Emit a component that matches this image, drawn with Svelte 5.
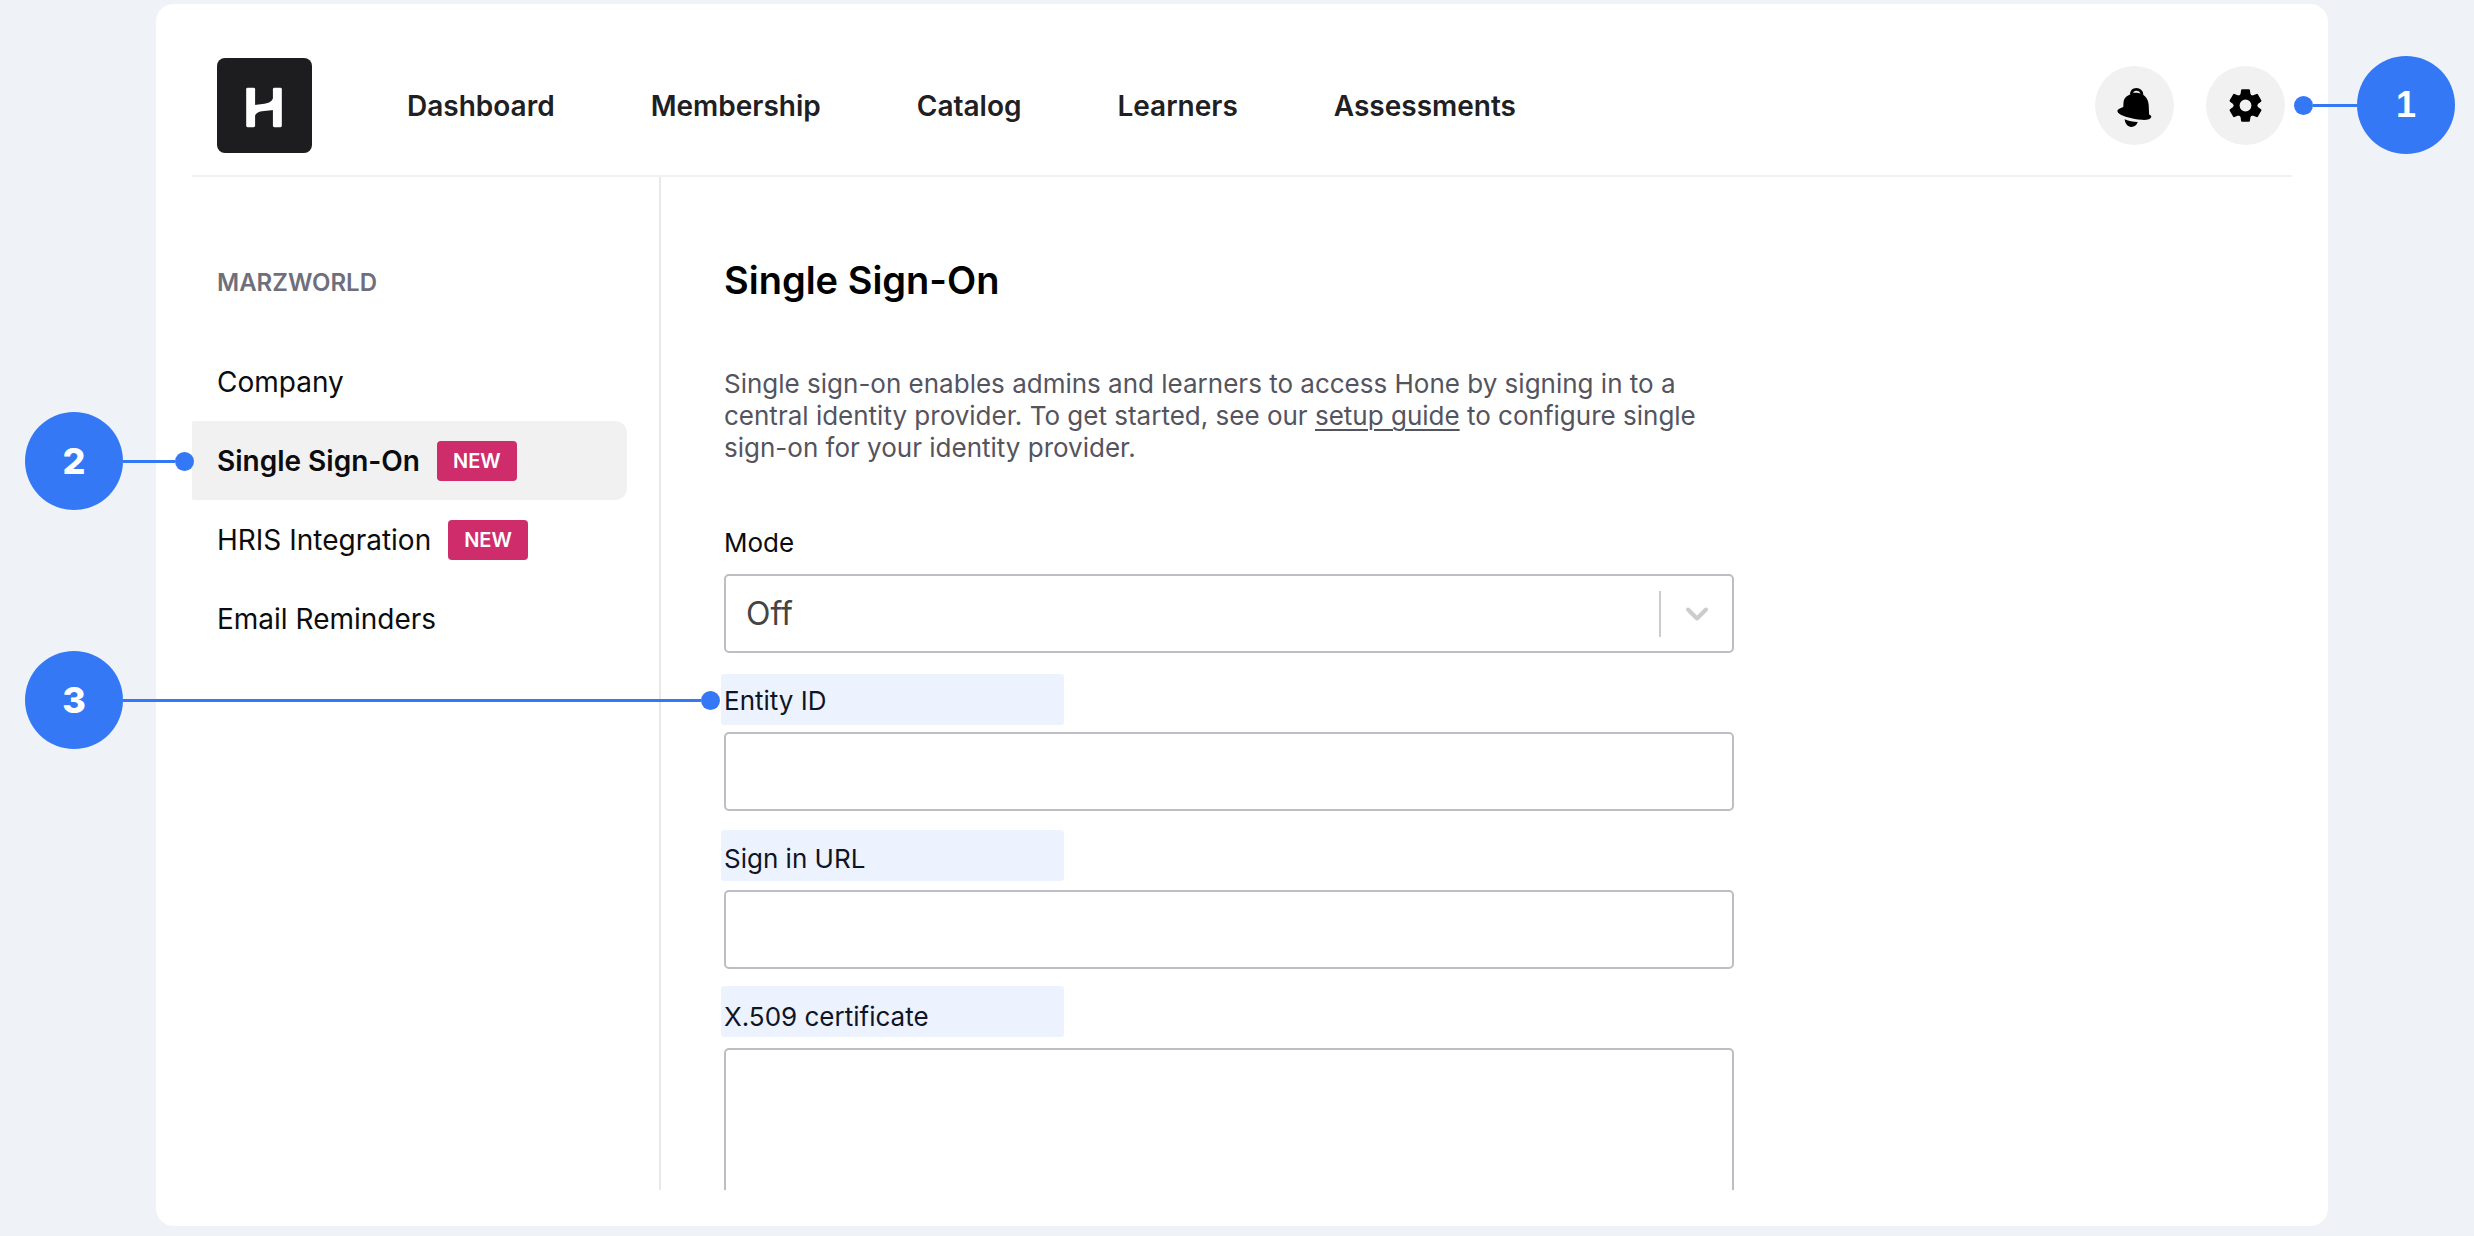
<script>
  const links = ['Dashboard', 'Membership', 'Catalog', 'Learners', 'Assessments'];
  const sections = [
    { name: 'Company' },
    { name: 'Single Sign-On', isNew: true, current: true },
    { name: 'HRIS Integration', isNew: true },
    { name: 'Email Reminders' }
  ];
  let mode = $state('off');
</script>

{#snippet callout(number, side)}
  <span class="callout {side}">
    <span class="number">{number}</span>
    <span class="line"></span>
    <span class="dot"></span>
  </span>
{/snippet}

<div class="page">
  <div class="card">
    <header>
      <a class="logo" href="#home" aria-label="Home">
        <svg viewBox="0 0 96 96" fill="#fff" aria-hidden="true">
          <rect x="29.500" y="30" width="9" height="40" rx="1.500" />
          <rect x="56.500" y="30" width="9" height="40" rx="1.500" />
          <path d="M38 47.500l10-1.300c6-.6 9-3.400 9.500-9.200V52.500l-10 1c-5.500.6-8.500 1.800-9.500 6z" />
        </svg>
      </a>
      <nav class="top" aria-label="Main">
        {#each links as link}
          <a href="#{link.toLowerCase()}">{link}</a>
        {/each}
      </nav>
      <div class="actions">
        <button type="button" aria-label="Notifications">
          <svg viewBox="0 0 80 80" aria-hidden="true">
            <path d="M36.800 29c.3-3.500 2.300-5.300 5-5.300 3 0 5.400 2 5.800 5.500" fill="none" stroke="#000" stroke-width="2.800" />
            <path d="M36 28.500c2-1.200 4-1.500 6.500-1.300 7.500.8 11.500 5.500 11.900 12.800l.4 9c1.600.7 2.400 1.500 2.200 2.600-.5 2.300-4.300 3.300-9.900 2.900-8.700-.6-18.500-3-22.800-6.300-1.400-1.200-2-2.600-1.300-3.700.8-1 3.100-1.700 5.600-3l.3-4.500c.3-4.500 2.700-6.700 7.100-8.500z" />
            <path d="M30 54c4.500 1.800 8.500 2.600 13.300 2.800-1.300 3.400-3.600 5-6.600 4.900-3.500-.1-6-2.700-6.700-7.700z" />
          </svg>
        </button>
        <button type="button" aria-label="Settings">
          <svg viewBox="-40 -40 80 80" aria-hidden="true">
            <circle r="9" fill="none" stroke="#000" stroke-width="6" />
            <g>
              {#each [0, 60, 120, 180, 240, 300] as angle}
                <path transform="rotate({angle})" d="M-3.400-16.500h6.800q1 0 1.100 1l.5 3.500 1.500 3.500h-13l1.500-3.500 .5-3.500q.1-1 1.100-1z" />
              {/each}
            </g>
          </svg>
          {@render callout(1, 'from-right')}
        </button>
      </div>
    </header>

    <div class="body">
      <aside>
        <h2>MARZWORLD</h2>
        <ul>
          {#each sections as s}
            <li class:current={s.current}>
              <a href="#{s.name.toLowerCase().replaceAll(' ', '-')}" aria-current={s.current ? 'page' : undefined}>{s.name}</a>
              {#if s.isNew}<span class="badge">NEW</span>{/if}
              {#if s.current}{@render callout(2, 'short')}{/if}
            </li>
          {/each}
        </ul>
      </aside>

      <main>
        <h1>Single Sign-On</h1>
        <p>
          Single sign-on enables admins and learners to access Hone by signing in to a central identity
          provider. To get started, see our <a href="#setup-guide">setup guide</a> to configure single
          sign-on for your identity provider.
        </p>
        <form>
          <div class="field">
            <label for="mode">Mode</label>
            <div class="select">
              <select id="mode" bind:value={mode}>
                <option value="off">Off</option>
                <option value="optional">Optional</option>
                <option value="required">Required</option>
              </select>
              <span class="arrow">
                <svg viewBox="0 0 24 16" aria-hidden="true"><path d="M3 3.500l9 9 9-9" /></svg>
              </span>
            </div>
          </div>
          <div class="field">
            <label for="entity">Entity ID {@render callout(3, 'long')}</label>
            <input id="entity" type="text" />
          </div>
          <div class="field">
            <label for="url">Sign in URL</label>
            <input id="url" type="text" />
          </div>
          <div class="field last">
            <label for="cert">X.509 certificate</label>
            <div class="clip"><textarea id="cert"></textarea></div>
          </div>
          <div class="marks" aria-hidden="true"><span></span><span></span><span></span></div>
        </form>
      </main>
    </div>
  </div>
</div>

<style>
  :global(body) {
    margin: 0;
    background: #eff3f8;
  }
  * {
    box-sizing: border-box;
  }
  .page {
    min-height: 100vh;
    display: flex;
    padding: 4px 146px 10px 156px;
    font-family: Inter, 'Liberation Sans', sans-serif;
    color: #0c0c0e;
  }
  .card {
    flex: 1;
    display: flex;
    flex-direction: column;
    padding: 0 36px 36px;
    border-radius: 18px;
    background: #fff;
  }
  a {
    color: inherit;
    text-decoration: none;
  }
  header {
    display: flex;
    align-items: center;
    padding: 54px 7px 22px 25px;
    border-bottom: 2px solid #f1f1f1;
  }
  .logo {
    width: 95px;
    height: 95px;
    margin-right: 95px;
    border-radius: 8px;
    background: #1d1d1f;
  }
  .logo svg,
  button svg {
    display: block;
    width: 100%;
    height: 100%;
  }
  .top {
    display: flex;
    gap: 96px;
    font-size: 28px;
    line-height: 32px;
    font-weight: 600;
    color: #1f2023;
  }
  .actions {
    display: flex;
    gap: 32px;
    margin-left: auto;
  }
  button {
    position: relative;
    width: 79px;
    height: 79px;
    padding: 0;
    border: 0;
    border-radius: 50%;
    background: #f1f1f1;
  }
  .body {
    flex: 1;
    display: flex;
  }
  aside {
    width: 469px;
    padding: 90px 32px 0 0;
    border-right: 2px solid #e8e8e9;
  }
  h2 {
    margin: 0 0 43px;
    padding-left: 25px;
    font-size: 24px;
    line-height: 32px;
    font-weight: 600;
    color: #6f6f7b;
  }
  ul {
    margin: 0;
    padding: 0;
    list-style: none;
  }
  li {
    position: relative;
    display: flex;
    align-items: center;
    gap: 17px;
    height: 79px;
    padding-left: 25px;
    font-size: 28px;
    line-height: 32px;
    border-radius: 2px 12px 12px 2px;
  }
  .current {
    background: #f1f1f1;
    font-weight: 600;
  }
  .badge {
    padding: 4px 16px;
    border-radius: 4px;
    background: #ce2c6b;
    color: #fff;
    font-size: 20px;
    line-height: 32px;
    font-weight: 600;
  }
  main {
    flex: 1;
    display: flex;
    flex-direction: column;
    padding: 79px 0 0 63px;
  }
  h1 {
    margin: 0 0 64px;
    font-size: 38px;
    line-height: 48px;
    font-weight: 600;
    color: #000;
  }
  p {
    margin: 0 0 31px;
    max-width: 980px;
    font-size: 26px;
    line-height: 32px;
    color: #54545e;
  }
  p a {
    text-decoration: underline;
    text-underline-offset: 4px;
    text-decoration-thickness: 2px;
  }
  form {
    position: relative;
    flex: 1;
    display: flex;
    flex-direction: column;
    max-width: 1010px;
  }
  .field {
    display: flex;
    flex-direction: column;
  }
  label {
    position: relative;
    padding: 32px 0 15px;
    font-size: 26px;
    line-height: 32px;
  }
  input,
  select,
  textarea {
    display: block;
    width: 100%;
    height: 79px;
    padding: 0 20px;
    border: 2px solid #bdbdc3;
    border-radius: 5px;
    background: #fff;
    color: #444;
    font: inherit;
    font-size: 32px;
    appearance: none;
    outline: 0;
  }
  .select {
    position: relative;
  }
  .arrow {
    position: absolute;
    top: 17px;
    right: 2px;
    bottom: 16px;
    width: 73px;
    display: grid;
    place-items: center;
    border-left: 2px solid #ccc;
    pointer-events: none;
  }
  .arrow svg {
    width: 24px;
    height: 16px;
    fill: none;
    stroke: #ccc;
    stroke-width: 4;
    stroke-linecap: round;
    stroke-linejoin: round;
  }
  .last {
    flex: 1;
  }
  .clip {
    flex: 1 0 140px;
    height: 140px;
    overflow: hidden;
  }
  textarea {
    height: 240px;
    padding: 20px;
    resize: none;
  }
  /* Highlights laid over the three field labels */
  .marks {
    position: absolute;
    top: 179px;
    left: -3px;
    display: flex;
    flex-direction: column;
    gap: 105px;
    pointer-events: none;
  }
  .marks span {
    width: 343px;
    height: 51px;
    border-radius: 3px;
    background: rgb(52 120 246 / 0.09);
  }
  /* Numbered callouts pointing at the element that holds them */
  .callout {
    position: absolute;
    z-index: 1;
    display: flex;
    align-items: center;
    height: 98px;
    pointer-events: none;
  }
  .number {
    width: 98px;
    height: 98px;
    border-radius: 50%;
    background: #3478f6;
    color: #fff;
    font-size: 36px;
    line-height: 98px;
    font-weight: 800;
    text-align: center;
  }
  .line {
    flex: 1;
    height: 3px;
    background: #3478f6;
  }
  .dot {
    width: 19px;
    height: 19px;
    border-radius: 50%;
    background: #3478f6;
  }
  .from-right {
    top: -10px;
    left: 88px;
    width: 161px;
    flex-direction: row-reverse;
  }
  .short {
    top: -9px;
    right: 433px;
    width: 169px;
  }
  .long {
    top: -2px;
    left: -699px;
    width: 695px;
  }
</style>
